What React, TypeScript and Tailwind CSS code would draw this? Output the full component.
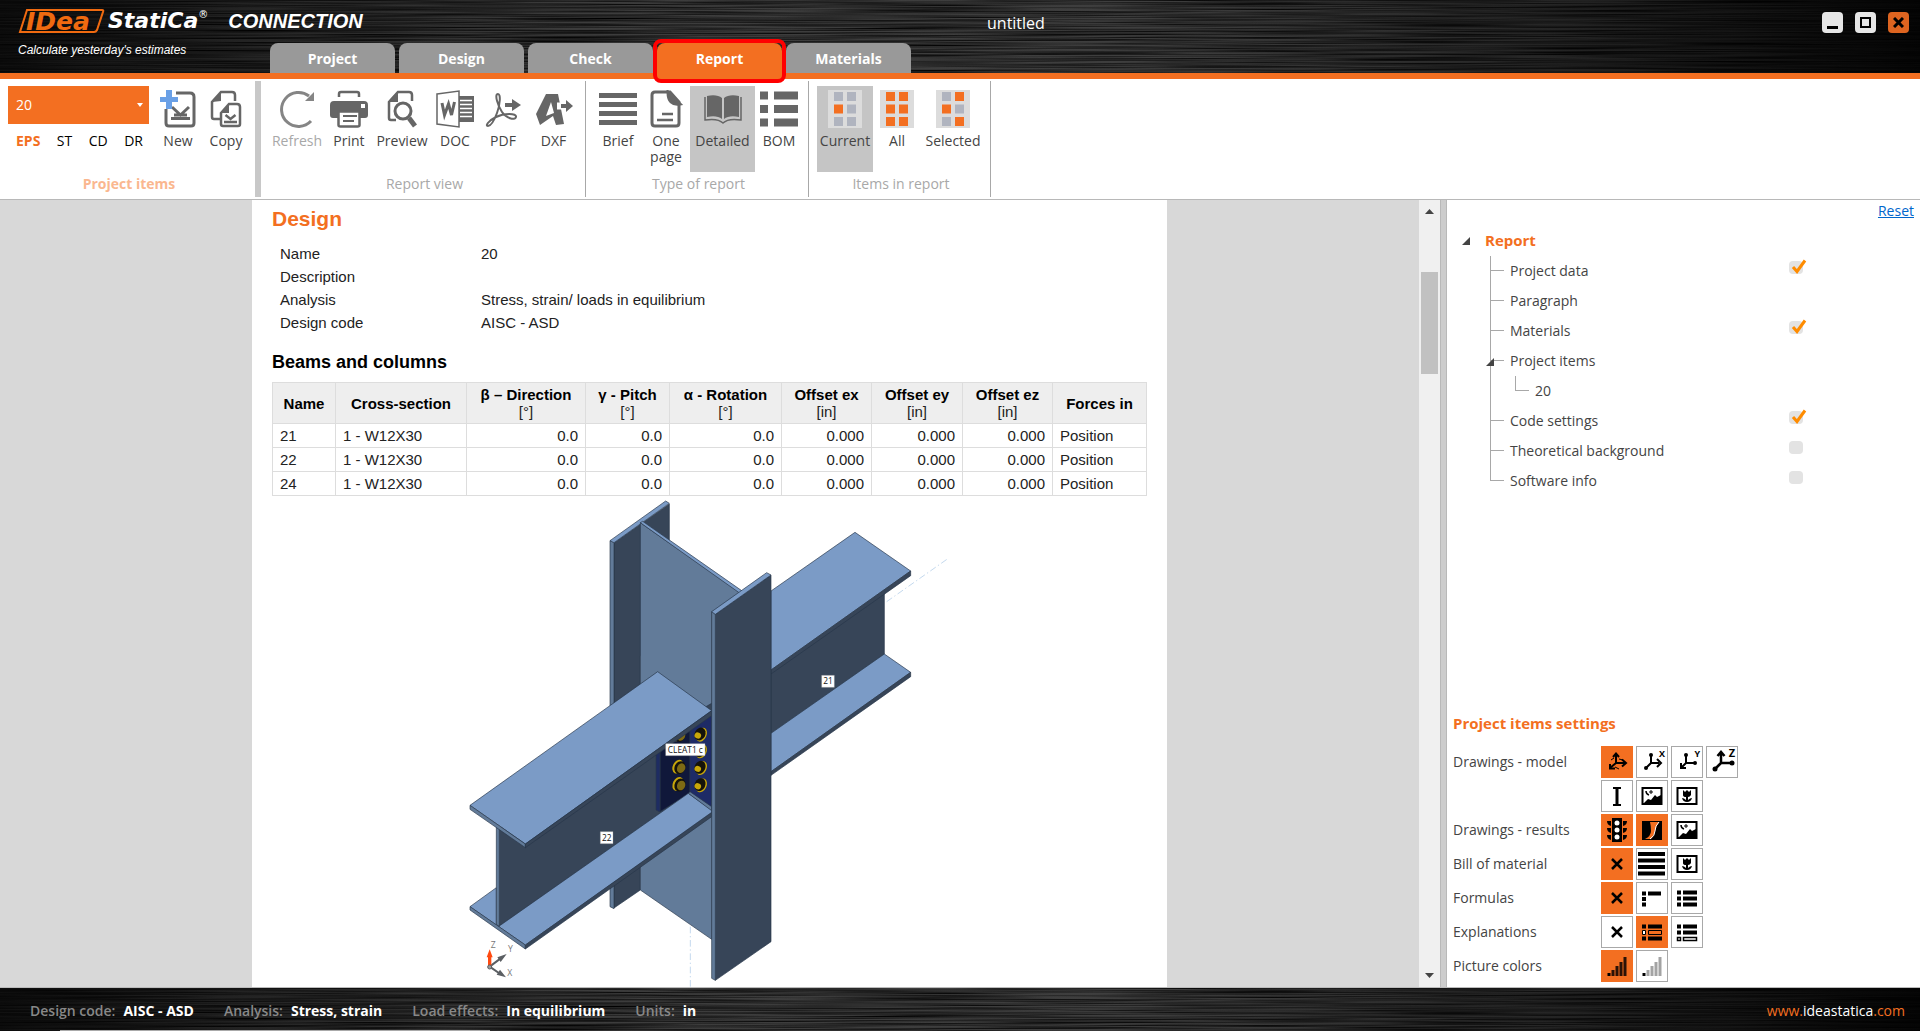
import React, { useState } from "react";

const tabs = ["Project", "Design", "Check", "Report", "Materials"];

const beams = ["21", "22", "24"];

const columns = [
  { title: "Name", unit: "" },
  { title: "Cross-section", unit: "" },
  { title: "β – Direction", unit: "[°]" },
  { title: "γ - Pitch", unit: "[°]" },
  { title: "α - Rotation", unit: "[°]" },
  { title: "Offset ex", unit: "[in]" },
  { title: "Offset ey", unit: "[in]" },
  { title: "Offset ez", unit: "[in]" },
  { title: "Forces in", unit: "" },
];

const Brushed: React.FC<{ id: string }> = ({ id }) => (
  <svg className="absolute inset-0 h-full w-full" aria-hidden="true">
    <defs>
      <linearGradient id={`${id}-shade`} x1="0" x2="1" y1="0" y2="0">
        <stop offset="0" stopColor="#101010" />
        <stop offset="0.12" stopColor="#222" />
        <stop offset="0.3" stopColor="#3c3c3c" />
        <stop offset="0.6" stopColor="#3e3e3e" />
        <stop offset="0.8" stopColor="#262626" />
        <stop offset="1" stopColor="#060606" />
      </linearGradient>
      <filter id={`${id}-grain`} x="0" y="0" width="100%" height="100%" colorInterpolationFilters="sRGB">
        <feTurbulence type="fractalNoise" baseFrequency="0.006 0.7" numOctaves="2" seed="7" />
        <feColorMatrix values="0 0 0 0 0  0 0 0 0 0  0 0 0 0 0  1.8 0 0 0 -0.58" />
      </filter>
    </defs>
    <rect width="100%" height="100%" fill={`url(#${id}-shade)`} />
    <rect width="100%" height="100%" filter={`url(#${id}-grain)`} />
  </svg>
);

/* ---------- Ribbon icons ---------- */

const Icon: React.FC<{ children: React.ReactNode }> = ({ children }) => (
  <svg width="38" height="38" viewBox="0 0 38 38" fill="none" stroke="#666" strokeWidth="3" aria-hidden="true">
    {children}
  </svg>
);

const NewIcon = () => (
  <Icon>
    <path d="M17 3h14q4 0 4 4v26q0 3-3 3H10q-3 0-3-3V19" />
    <path d="M12 28.500h19M13 17l8.500 8 8.500-8M15 25h13" />
    <path d="M7 0h6v7h6v5h-6v7H7v-7H1V7h6z" fill="#6aa0e6" stroke="none" />
  </Icon>
);

const CopyIcon = () => (
  <Icon>
    <path d="M13 29H7q-2 0-2-2V12l9-10h11q3 0 3 3v6" strokeWidth="2.500" />
    <path d="M5 12l9-10v9z" fill="#666" stroke="none" />
    <path d="M14 23l8-9h8q3 0 3 3v17q0 2-2 2H16q-2 0-2-2z" strokeWidth="2.500" />
    <path d="M14 23l8-9v9z" fill="#666" stroke="none" />
    <path d="M17 32h13M18.500 25l5 4 5-4" strokeWidth="2.500" />
  </Icon>
);

const RefreshIcon = () => (
  <Icon>
    <g stroke="#858585">
      <path d="M33 31A17 17 0 1 1 31 6" />
      <path d="M36 2v9h-9z" fill="#858585" stroke="none" />
    </g>
  </Icon>
);

const PrintIcon = () => (
  <Icon>
    <path d="M9 7V4q0-2 2-2h16q2 0 2 2v3" strokeWidth="2.500" />
    <path d="M4 11h30q4 0 4 4v10q0 3-3 3h-5v-6H8v6H3q-3 0-3-3V15q0-4 4-4z" fill="#666" stroke="none" />
    <rect x="31" y="14" width="4" height="4" fill="#fff" stroke="none" />
    <path d="M8.500 21.500h21V35q0 1.500-2 1.500h-17q-2 0-2-1.500z" fill="#fff" strokeWidth="2.500" />
    <path d="M13 26h14M13 31h11" strokeWidth="2" />
  </Icon>
);

const PreviewIcon = () => (
  <Icon>
    <path d="M13 30H8q-2 0-2-2V12l9-10h11q3 0 3 3v6" strokeWidth="2.500" />
    <path d="M5 12l10-11v11z" fill="#666" stroke="none" />
    <circle cx="20" cy="21" r="8" />
    <path d="M26 28l6 8" strokeWidth="5" />
  </Icon>
);

const DocIcon = () => (
  <Icon>
    <path d="M23 6h15v26H23z" fill="#666" stroke="none" />
    <path d="M24 10.500h12M24 14.500h12M24 18.500h12M24 22.500h12M24 26.500h12" stroke="#fff" strokeWidth="1.500" />
    <path d="M1 4l22-3v36L1 34z" fill="#fff" strokeWidth="1.500" />
    <path d="M6 13l2.500 12 4-11 3 11 3-13" strokeWidth="3" />
  </Icon>
);

const PdfIcon = () => (
  <Icon>
    <path d="M14 4c-4 0 0 12 4 18s13 9 14 5-12-4-20 0-11 9-8 9 6-5 9-13 4-19 1-19z" strokeWidth="2" />
    <path d="M21 15h8" strokeWidth="4" />
    <path d="M28 9l9 6-9 6z" fill="#666" stroke="none" />
  </Icon>
);

const DxfIcon = () => (
  <Icon>
    <path d="M1 24L11 4h12l6 30-8 1-3-9-13 9z" fill="#666" stroke="none" />
    <path d="M16 12l-5 14 8-3z" fill="#fff" stroke="none" />
    <path d="M22 16h8" stroke="#fff" strokeWidth="7" />
    <path d="M26 16h6" strokeWidth="4" />
    <path d="M31 10l7 6-7 6z" fill="#666" stroke="none" />
  </Icon>
);

const BriefIcon = () => (
  <Icon>
    <path d="M0 5.500h38M0 14.500h38M0 23.500h38M0 32.500h38" strokeWidth="5" />
  </Icon>
);

const OnePageIcon = () => (
  <Icon>
    <path d="M9 2h14l9 10v21q0 3-3 3H8q-3 0-3-3V5q0-3 3-3z" />
    <path d="M21 2l12 12q-12 2-12-12z" fill="#666" />
    <path d="M15 24h11M10 30h16" strokeWidth="2.500" />
  </Icon>
);

const DetailedIcon = () => (
  <Icon>
    <path d="M3 6q10-2 15 2v21q-5-4-15-2z" fill="#666" stroke="none" />
    <path d="M35 6q-10-2-15 2v21q5-4 15-2z" fill="#666" stroke="none" />
    <path d="M1 7v23q13-2 18 3 5-5 18-3V7" strokeWidth="1.500" />
  </Icon>
);

const BomIcon = () => (
  <Icon>
    <path d="M0 5.500h8M14 5.500h24M0 19h8M14 19h24M0 32.500h8M14 32.500h24" strokeWidth="8" />
  </Icon>
);

// Two columns by three rows, "on" lists the highlighted squares
const GridIcon: React.FC<{ on: number[] }> = ({ on }) => (
  <Icon>
    <rect x="2" width="34" height="38" fill="#dcdcdc" stroke="none" />
    {[0, 1, 2, 3, 4, 5].map((i) => (
      <rect
        key={i}
        x={8 + (i % 2) * 13}
        y={2 + Math.floor(i / 2) * 12.5}
        width="9"
        height="9"
        fill={on.includes(i) ? "#f36f21" : "#b0b4bf"}
        stroke="none"
      />
    ))}
  </Icon>
);

interface RibbonButtonProps {
  label: string;
  icon: React.ReactNode;
  width?: string;
  active?: boolean;
  disabled?: boolean;
}

const RibbonButton: React.FC<RibbonButtonProps> = ({ label, icon, width = "w-12", active, disabled }) => (
  <button
    type="button"
    disabled={disabled}
    className={`flex h-[86px] flex-col items-center gap-[5px] pt-1 leading-4 ${width} ${
      active ? "bg-[#c5c5c5]" : ""
    } ${disabled ? "text-[#a8a8a8]" : "text-[#444]"}`}
  >
    {icon}
    <span>{label}</span>
  </button>
);

const RibbonGroup: React.FC<{ title: string; children: React.ReactNode }> = ({ title, children }) => (
  <section className="my-[2px] border-r border-[#a8a8a8] py-[5px] pr-[5px] pl-2">
    <div className="flex">{children}</div>
    <h2 className="mt-1 text-center leading-4 text-[#a8a8a8]">{title}</h2>
  </section>
);

/* ---------- Structure drawing ---------- */

const LIGHT = "#7b9bc6";
const MID = "#627b99";
const DARK = "#374558";

const Bolt: React.FC<{ x: number; y: number; nut?: boolean }> = ({ x, y, nut }) => (
  <g transform={`translate(${x} ${y}) rotate(25)`} stroke="none">
    <ellipse cx={nut ? 5 : -5} rx="15" ry="22" fill="#c7a60a" />
    <ellipse cx={nut ? 0 : 2} rx="16" ry="20" fill="#15130a" />
    <ellipse cx={nut ? -4 : 6} cy={nut ? 7 : 0} rx={nut ? 10 : 12} ry={nut ? 9 : 15} fill={nut ? "#c7a60a" : "#7d6a14"} />
  </g>
);

const Tag: React.FC<{ x: number; y: number; w: number; text: string }> = ({ x, y, w, text }) => (
  <g stroke="none">
    <rect x={x} y={y} width={w} height="36" fill="#fff" stroke="#999" />
    <text x={x + w / 2} y={y + 27} textAnchor="middle" fontSize="25" fill="#111" fontFamily="'Open Sans', sans-serif">
      {text}
    </text>
  </g>
);

const JointDrawing = () => (
  <svg width="490" height="491" viewBox="0 18 1470 1473" className="shrink-0" strokeLinejoin="round" role="img" aria-label="Joint model">
    <path d="M1280 335L1465 205M691 1310V1491" stroke="#c4d9ee" strokeWidth="3" strokeDasharray="20 8 4 8" />
    <g stroke="#27364a" strokeWidth="2">
      {/* back flange */}
      <path d="M462 158L628 42V300L541 500V1200L462 1254z" fill={DARK} />
      <path d="M450 152l12 6v1098l-12-6z" fill={MID} />
      <path d="M450 152L617 33l11 7L462 158z" fill={LIGHT} />
      {/* column web */}
      <path d="M541 98l299 210 -85 60v980L541 1200z" fill={MID} />
      <path d="M541 98l7-4 300 210-8 6z" fill={LIGHT} />
      {/* beam 21 */}
      <path d="M933 545L1273 310V495L933 733z" fill={DARK} />
      <path d="M933 730L1273 492l79 55L933 845z" fill={LIGHT} />
      <path d="M933 845L1352 547v13L933 856z" fill={DARK} />
      <path d="M933 303L1185 127l167 116L933 540z" fill={LIGHT} />
      <path d="M933 540L1352 243v14L933 552z" fill={DARK} />
      {/* beam 22 */}
      <path d="M118 1015L755 640V930L118 1308z" fill={DARK} />
      <path d="M600 770l90-60v200l-90 55z" fill="#10183a" />
      <path d="M588 780h12v186l-12-6z" fill="#1e2c62" />
      <path d="M690 700l65-40v300l-65-40z" fill="#1e2b66" />
      <g>
        <Bolt x={658} y={735} />
        <Bolt x={658} y={832} />
        <Bolt x={658} y={884} />
        <Bolt x={720} y={732} nut />
        <Bolt x={720} y={782} nut />
        <Bolt x={720} y={832} nut />
        <Bolt x={720} y={884} nut />
      </g>
      <path d="M30 1250l79-57v110l9 5L685 910l70 50v10L196 1365z" fill={LIGHT} />
      <path d="M685 910l5-5 65 45v12z" fill={MID} />
      <path d="M30 1250l166 115v12L30 1260z" fill={MID} />
      <path d="M196 1365L755 967v13L196 1377z" fill={DARK} />
      <path d="M109 1005l9 6v298l-9-6z" fill={MID} />
      <path d="M30 946L593 545l162 117L196 1062z" fill={LIGHT} />
      <path d="M30 946l166 116v11L30 958z" fill={MID} />
      <path d="M196 1062L755 662v15L196 1073z" fill={DARK} />
      {/* front flange */}
      <path d="M766 373L933 255v1100L766 1471z" fill={DARK} />
      <path d="M755 365l11 8v1098l-11-6z" fill={MID} />
      <path d="M755 365L920 248l13 7L766 373z" fill={LIGHT} />
    </g>
    <Tag x={617} y={761} w={118} text="CLEAT1 c" />
    <Tag x={1085} y={556} w={38} text="21" />
    <Tag x={421} y={1025} w={38} text="22" />
    {/* axes */}
    <g stroke="#5b5f63" strokeWidth="6" fill="#5b5f63">
      <path d="M89 1430l32-24M89 1430l32 22" />
      <path d="M140 1392l-18 24-10-14zM138 1462l-28-8 10-15z" stroke="none" />
      <path d="M89 1430v-32" stroke="#ff4a10" strokeWidth="10" />
      <path d="M89 1378l9 24H80z" fill="#ff4a10" stroke="none" />
      <circle cx="89" cy="1431" r="6" fill="#999" strokeWidth="3" />
    </g>
    <g fontSize="26" fill="#777" fontFamily="'Open Sans', sans-serif">
      <text x="92" y="1373">Z</text>
      <text x="144" y="1387">Y</text>
      <text x="142" y="1457">X</text>
    </g>
  </svg>
);

/* ---------- Settings icons ---------- */

const Small: React.FC<{ children: React.ReactNode }> = ({ children }) => (
  <svg width="30" height="30" viewBox="0 0 30 30" className="overflow-visible" fill="none" stroke="#000" strokeWidth="2" aria-hidden="true">
    {children}
  </svg>
);

const Axes3d = (
  <Small>
    <path d="M14 16V7M14 16h9M14 16l-6 5" />
    <path d="M11 10l3-3.500 3 3.500M20 12.500l4 3.500-4 3.500M8 17v4.500h5" />
    <path d="M9 13l3-2M17 12l4 1M13 20l4 2" strokeWidth="1" />
  </Small>
);

// View along one axis: dots mark the far ends, arrows the visible ones
const axisView = (axis: string) => (
  <Small>
    {axis === "Z" ? (
      <g strokeWidth="2.500">
        <path d="M14 16V5M14 16h10M14 16l-6 6M10.500 9L14 5l3.500 4" />
        <circle cx="25" cy="16" r="2.500" fill="#000" stroke="none" />
        <circle cx="8" cy="22" r="2.500" fill="#000" stroke="none" />
      </g>
    ) : (
      <g>
        <path d="M14 16V8M14 16h8M14 16l-5 5" />
        <circle cx="14" cy="8" r="2" fill="#000" stroke="none" />
        {axis === "X" ? <path d="M20 12l4 4-4 4" /> : <circle cx="23" cy="16" r="2" fill="#000" stroke="none" />}
        {axis === "Y" ? <path d="M9 16v5h5" /> : <circle cx="9" cy="21" r="2" fill="#000" stroke="none" />}
      </g>
    )}
    <text
      x="28"
      y="10"
      textAnchor="end"
      fontSize={axis === "Z" ? 11 : 9}
      fontWeight="700"
      fill="#000"
      stroke="none"
      fontFamily="'Open Sans', sans-serif"
    >
      {axis}
    </text>
  </Small>
);

const ProfileIcon = (
  <Small>
    <path d="M11 7h8M11 24h8" strokeWidth="2" />
    <path d="M15 7v17" strokeWidth="3" />
  </Small>
);

const Landscape = (
  <Small>
    <rect x="5.500" y="7" width="19" height="16" />
    <path d="M7 22l4-4 3 1 4-5 2 2 4-2v8z" fill="#000" stroke="none" />
    <path d="M9 10q0 3 3 4" strokeWidth="1.500" />
    <path d="M14 9v4M12 11h4" strokeWidth="1" />
  </Small>
);

const Flower = (
  <Small>
    <rect x="5.500" y="7" width="19" height="16" />
    <path d="M11 9l2 2 2-2 2 2 2-2v5q-1 2-3 2v3q2-2 4-2-1 4-5 4t-5-4q2 0 4 2v-3q-3 0-3-2z" fill="#000" stroke="none" />
  </Small>
);

const TrafficLight = (
  <Small>
    <rect x="11" y="4" width="8" height="22" fill="#000" />
    <path d="M5 6h4v5q-4-1-4-5zM5 13h4v5q-4-1-4-5zM5 20h4v5q-4-1-4-5zM25 6h-4v5q4-1 4-5zM25 13h-4v5q4-1 4-5zM25 20h-4v5q4-1 4-5z" fill="#000" stroke="none" />
    <g fill="#fff" stroke="none">
      <circle cx="15" cy="8" r="2.500" />
      <circle cx="15" cy="15" r="2.500" />
      <circle cx="15" cy="22" r="2.500" />
    </g>
  </Small>
);

const RoadIcon = (
  <Small>
    <rect x="5" y="6" width="20" height="19" fill="#000" stroke="none" />
    <path d="M13 7h9q-3 4-4 9t-4 8H8q6-3 6-8t-1-9z" fill="#f36f21" stroke="none" />
    <path d="M22 7q-4 4-4 9t-5 8" stroke="#fff" strokeWidth="1" />
  </Small>
);

const NoneIcon = (
  <Small>
    <path d="M10 10l10 10M20 10L10 20" strokeWidth="2.500" />
  </Small>
);

const LinesIcon = (
  <Small>
    <path d="M1 5h27M1 11.500h27M1 18h27M1 24.500h27" strokeWidth="4" />
  </Small>
);

const ShortList = (
  <Small>
    <path d="M5 10.500h4M11 10.500h13M5 16h4M5 21.500h4" strokeWidth="4" />
  </Small>
);

const FullList = (
  <Small>
    <path d="M5 9.500h4M11 9.500h14M5 15.500h4M11 15.500h14M5 21.500h4M11 21.500h14" strokeWidth="4" />
  </Small>
);

const MiddleList = (
  <Small>
    <path d="M5 9.500h4M11 9.500h14M5 21.500h4M11 21.500h14" strokeWidth="4" />
    <path d="M5.500 13.500h3v4h-3z" fill="#fff" strokeWidth="1" />
    <path d="M11.500 13.500h13v4h-13z" strokeWidth="1" />
  </Small>
);

const EndList = (
  <Small>
    <path d="M5 9.500h4M11 9.500h14M5 15.500h4M11 15.500h14" strokeWidth="4" />
    <path d="M5.500 20.500h3v3h-3zM11.500 20.500h13v3h-13z" strokeWidth="1.500" />
  </Small>
);

const barsIcon = (color: string) => (
  <Small>
    <path d="M11 25v-6M15 25V15M19 25V11M23 25V6" stroke={color} strokeWidth="3" />
    <path d="M7 25v-3" strokeWidth="3" />
  </Small>
);

interface Option {
  name: string;
  icon: React.ReactNode;
  on?: boolean;
}

const settings: { label: string; options: Option[] }[] = [
  {
    label: "Drawings - model",
    options: [
      { name: "Axonometry", icon: Axes3d, on: true },
      { name: "View X", icon: axisView("X") },
      { name: "View Y", icon: axisView("Y") },
      { name: "View Z", icon: axisView("Z") },
    ],
  },
  {
    label: "",
    options: [
      { name: "Cross-section", icon: ProfileIcon },
      { name: "Scene", icon: Landscape },
      { name: "Picture", icon: Flower },
    ],
  },
  {
    label: "Drawings - results",
    options: [
      { name: "Overall check", icon: TrafficLight, on: true },
      { name: "Strain", icon: RoadIcon, on: true },
      { name: "Scene", icon: Landscape },
    ],
  },
  {
    label: "Bill of material",
    options: [
      { name: "None", icon: NoneIcon, on: true },
      { name: "Table", icon: LinesIcon },
      { name: "Picture", icon: Flower },
    ],
  },
  {
    label: "Formulas",
    options: [
      { name: "None", icon: NoneIcon, on: true },
      { name: "Short", icon: ShortList },
      { name: "Full", icon: FullList },
    ],
  },
  {
    label: "Explanations",
    options: [
      { name: "None", icon: NoneIcon },
      { name: "After table", icon: MiddleList, on: true },
      { name: "At the end", icon: EndList },
    ],
  },
  {
    label: "Picture colors",
    options: [
      { name: "Color", icon: barsIcon("#2b1206"), on: true },
      { name: "Gray", icon: barsIcon("#a3a3a3") },
    ],
  },
];

/* ---------- Report tree ---------- */

interface TreeItem {
  label: string;
  checked?: boolean;
  child?: boolean;
  expanded?: boolean;
}

const treeItems: TreeItem[] = [
  { label: "Project data", checked: true },
  { label: "Paragraph" },
  { label: "Materials", checked: true },
  { label: "Project items", expanded: true },
  { label: "20", child: true },
  { label: "Code settings", checked: true },
  { label: "Theoretical background", checked: false },
  { label: "Software info", checked: false },
];

const Branch: React.FC<{ last?: boolean; children?: React.ReactNode }> = ({ last, children }) => (
  <span className="relative flex h-full w-[14px] shrink-0 flex-col">
    <span className="h-1/2 border-b border-l border-[#a8a8a8]" />
    <span className={last ? "h-1/2" : "h-1/2 border-l border-[#a8a8a8]"} />
    {children}
  </span>
);

const Expander = () => (
  <svg width="8" height="8" viewBox="0 0 8 8" fill="#444" aria-hidden="true">
    <path d="M8 0v8H0z" />
  </svg>
);

const TreeRow: React.FC<{ item: TreeItem; last: boolean }> = ({ item, last }) => {
  const [checked, setChecked] = useState(!!item.checked);
  return (
    <li>
      <label className="flex h-[30px] items-center">
        {item.child ? (
          <>
            <span className="h-full w-[25px] border-l border-[#a8a8a8]" />
            <Branch last />
          </>
        ) : (
          <Branch last={last}>
            {item.expanded && (
              <span className="absolute top-3 -left-1">
                <Expander />
              </span>
            )}
          </Branch>
        )}
        <span className="flex-1 pl-[6px]">{item.label}</span>
        {item.checked !== undefined && (
          <span className="relative mb-[7px] h-[13px] w-[14px]">
            <input
              type="checkbox"
              checked={checked}
              onChange={(e) => setChecked(e.target.checked)}
              className="block h-[13px] w-[14px] appearance-none rounded-sm bg-[#e3e3e3]"
            />
            {checked && (
              <svg className="pointer-events-none absolute -top-[2px] left-[2px]" width="16" height="15" viewBox="0 0 16 15" fill="none" aria-hidden="true">
                <path d="M2 8l4 4.500 8-11" stroke="#ff8c00" strokeWidth="3" />
              </svg>
            )}
          </span>
        )}
      </label>
    </li>
  );
};

const statusItems = [
  ["Design code:", "AISC - ASD"],
  ["Analysis:", "Stress, strain"],
  ["Load effects:", "In equilibrium"],
  ["Units:", "in"],
];

const App: React.FC = () => {
  const [activeTab, setActiveTab] = useState("Report");

  return (
    <div className="flex h-screen flex-col overflow-hidden bg-white font-['Open_Sans','Noto_Sans',sans-serif] text-sm text-[#444]">
      {/* Title bar */}
      <header className="relative shrink-0 border-b-[6px] border-[#f36f21]">
        <Brushed id="top" />
        <div className="relative flex h-[73px] text-white">
          <div className="flex w-[270px] shrink-0 flex-col pt-2 pl-[18px] whitespace-nowrap">
            <div className="flex items-center">
              <svg width="88" height="26" viewBox="0 0 88 26" className="shrink-0 overflow-visible" role="img" aria-label="IDEA">
                <path d="M9 2h75q2 0 1 2l-6 18q-1 2-3 2H2z" fill="none" stroke="#f06a10" strokeWidth="2" />
                <text x="8" y="22" fontSize="25" fontWeight="700" fontStyle="italic" fill="#f06a10" fontFamily="'DejaVu Sans', sans-serif">
                  IDea
                </text>
              </svg>
              <span className="flex items-start pl-[2px] font-['DejaVu_Sans',sans-serif] text-[22px] leading-6 font-bold italic">
                StatiCa
                <sup className="top-0 text-[10px] leading-3 font-normal">®</sup>
              </span>
              <span className="pl-5 font-['Liberation_Sans',sans-serif] text-xl leading-6 font-bold italic">CONNECTION</span>
            </div>
            <span className="pt-2 font-['Liberation_Sans',sans-serif] text-xs leading-4 italic">Calculate yesterday's estimates</span>
          </div>
          <nav className="flex items-end gap-1">
            {tabs.map((tab) => (
              <button
                key={tab}
                type="button"
                onClick={() => setActiveTab(tab)}
                className={`relative h-[30px] w-[125px] rounded-t-lg pt-[2px] font-bold text-white ${
                  tab === activeTab ? "bg-[#f36f21]" : "bg-[#999]"
                }`}
              >
                {tab}
                {tab === activeTab && (
                  <span className="absolute -inset-x-1 -top-1 -bottom-[10px] rounded-lg border-4 border-[#f00]" />
                )}
              </button>
            ))}
          </nav>
          <p className="pt-3 pl-[76px] text-base leading-[22px]">untitled</p>
          <div className="ml-auto flex gap-3 pt-3 pr-[11px]">
            <button type="button" aria-label="Minimize" className="flex h-[21px] w-[21px] items-end justify-center rounded-sm bg-[#e6e6e6] pb-1">
              <span className="h-[3px] w-[11px] bg-black" />
            </button>
            <button type="button" aria-label="Maximize" className="flex h-[21px] w-[21px] items-center justify-center rounded-sm bg-[#e6e6e6]">
              <span className="h-[11px] w-[11px] border-2 border-black" />
            </button>
            <button type="button" aria-label="Close" className="flex h-[21px] w-[21px] items-center justify-center rounded-sm bg-[#dd6420]">
              <svg width="11" height="11" viewBox="0 0 11 11" stroke="#000" strokeWidth="3">
                <path d="M1 1l9 9M10 1l-9 9" />
              </svg>
            </button>
          </div>
        </div>
      </header>

      {/* Ribbon */}
      <div className="flex shrink-0 border-b border-[#b8b8b8]">
        <section className="my-[2px] border-r-[6px] border-[#c8c8c8] py-[5px] pr-[5px] pl-2">
          <div className="flex h-[86px]">
            <div className="w-[146px] pr-[5px]">
              <div className="relative">
                <select aria-label="Project item" className="h-[38px] w-full appearance-none bg-[#f36f21] pl-2 text-white">
                  <option>20</option>
                </select>
                <svg className="pointer-events-none absolute top-[17px] right-[6px]" width="6" height="4" viewBox="0 0 6 4" fill="#fff" aria-hidden="true">
                  <path d="M0 0h6L3 4z" />
                </svg>
              </div>
              <div className="mt-[9px] flex justify-between pr-[6px] pl-2 leading-4 text-black">
                <button type="button" className="font-bold text-[#f36f21]">EPS</button>
                <button type="button">ST</button>
                <button type="button">CD</button>
                <button type="button">DR</button>
              </div>
            </div>
            <RibbonButton label="New" icon={<NewIcon />} />
            <RibbonButton label="Copy" icon={<CopyIcon />} />
          </div>
          <h2 className="mt-1 text-center leading-4 font-bold text-[#fab78f]">Project items</h2>
        </section>
        <RibbonGroup title="Report view">
          <RibbonButton label="Refresh" icon={<RefreshIcon />} width="w-[56px]" disabled />
          <RibbonButton label="Print" icon={<PrintIcon />} />
          <RibbonButton label="Preview" icon={<PreviewIcon />} width="w-[58px]" />
          <RibbonButton label="DOC" icon={<DocIcon />} />
          <RibbonButton label="PDF" icon={<PdfIcon />} />
          <RibbonButton label="DXF" icon={<DxfIcon />} width="w-[53px]" />
        </RibbonGroup>
        <RibbonGroup title="Type of report">
          <RibbonButton label="Brief" icon={<BriefIcon />} />
          <RibbonButton label="One page" icon={<OnePageIcon />} />
          <RibbonButton label="Detailed" icon={<DetailedIcon />} width="w-[65px]" active />
          <RibbonButton label="BOM" icon={<BomIcon />} />
        </RibbonGroup>
        <RibbonGroup title="Items in report">
          <RibbonButton label="Current" icon={<GridIcon on={[2]} />} width="w-[56px]" active />
          <RibbonButton label="All" icon={<GridIcon on={[0, 1, 2, 3, 4, 5]} />} />
          <RibbonButton label="Selected" icon={<GridIcon on={[1, 2, 5]} />} width="w-[64px]" />
        </RibbonGroup>
      </div>

      {/* Workspace */}
      <div className="flex min-h-0 flex-1 border-b border-[#bbb]">
        <main className="flex min-w-0 flex-1 justify-center overflow-hidden bg-[#d8d8d8] font-['Liberation_Sans',Arial,sans-serif] text-[15px] text-[#222]">
          <article className="w-full max-w-[915px] bg-white px-5 pt-[7px]">
            <h1 className="text-[21px] leading-6 font-bold text-[#f36f21]">Design</h1>
            <dl className="mt-[11px] grid grid-cols-[201px_1fr] pl-2 leading-[23px]">
              <dt>Name</dt>
              <dd>20</dd>
              <dt>Description</dt>
              <dd />
              <dt>Analysis</dt>
              <dd>Stress, strain/ loads in equilibrium</dd>
              <dt>Design code</dt>
              <dd>AISC - ASD</dd>
            </dl>
            <h2 className="mt-4 text-lg leading-6 font-bold text-black">Beams and columns</h2>
            <table className="mt-2 w-full table-fixed border-collapse">
              <colgroup>
                <col className="w-[63px]" />
                <col className="w-[131px]" />
                <col className="w-[119px]" />
                <col className="w-[84px]" />
                <col className="w-[112px]" />
                <col className="w-[90px]" />
                <col className="w-[91px]" />
                <col className="w-[90px]" />
                <col className="w-[94px]" />
              </colgroup>
              <thead>
                <tr className="h-[41px] bg-[#eee]">
                  {columns.map((col) => (
                    <th key={col.title} className="border border-[#ddd] leading-[17px] font-bold text-black">
                      {col.title}
                      {col.unit && <span className="block font-normal text-[#222]">{col.unit}</span>}
                    </th>
                  ))}
                </tr>
              </thead>
              <tbody>
                {beams.map((name) => (
                  <tr key={name} className="h-6 [&>td]:border [&>td]:border-[#ddd] [&>td]:px-[7px] [&>td]:leading-5">
                    <td>{name}</td>
                    <td>1 - W12X30</td>
                    <td className="text-right">0.0</td>
                    <td className="text-right">0.0</td>
                    <td className="text-right">0.0</td>
                    <td className="text-right">0.000</td>
                    <td className="text-right">0.000</td>
                    <td className="text-right">0.000</td>
                    <td>Position</td>
                  </tr>
                ))}
              </tbody>
            </table>
            <div className="flex justify-center pr-[10px]">
              <JointDrawing />
            </div>
          </article>
        </main>

        {/* Scroll bar */}
        <div className="flex w-[21px] shrink-0 flex-col items-center bg-[#f0f0f0] py-[9px]">
          <svg width="9" height="5" viewBox="0 0 9 5" fill="#444" aria-hidden="true">
            <path d="M0 5h9L4.500 0z" />
          </svg>
          <div className="mt-[58px] h-[102px] w-[17px] bg-[#c1c1c1]" />
          <svg className="mt-auto" width="9" height="5" viewBox="0 0 9 5" fill="#444" aria-hidden="true">
            <path d="M0 0h9L4.500 5z" />
          </svg>
        </div>
        <div className="w-[7px] shrink-0 border-x border-[#b8b8b8] bg-[#ccc]" />

        <aside className="flex w-[473px] shrink-0 flex-col bg-white pb-[5px]">
          <div className="flex justify-end pr-[6px]">
            <a href="#reset" className="leading-[22px] text-[#0066cc] underline">Reset</a>
          </div>
          <div className="mt-1 flex h-[30px] items-center gap-[15px] pl-[15px]">
            <Expander />
            <h2 className="text-[15px] font-bold text-[#f36f21]">Report</h2>
          </div>
          <ul className="pr-[117px] pl-[43px]">
            {treeItems.map((item, i) => (
              <TreeRow key={item.label} item={item} last={i === treeItems.length - 1} />
            ))}
          </ul>

          <div className="mt-auto pl-[6px]">
            <h2 className="mb-[11px] text-[15px] leading-6 font-bold text-[#f36f21]">Project items settings</h2>
            <div className="flex flex-col gap-[2px]">
              {settings.map((row) => (
                <div key={row.label} className="flex items-center">
                  <span className="w-[148px]">{row.label}</span>
                  <div className="flex gap-[3px]">
                    {row.options.map((opt) => (
                      <button
                        key={opt.name}
                        type="button"
                        aria-label={opt.name}
                        aria-pressed={!!opt.on}
                        className={`h-8 w-8 border ${
                          opt.on ? "border-[#f36f21] bg-[#f36f21]" : "border-[#a8a8a8] bg-white"
                        }`}
                      >
                        {opt.icon}
                      </button>
                    ))}
                  </div>
                </div>
              ))}
            </div>
          </div>
        </aside>
      </div>

      {/* Status bar */}
      <footer className="relative shrink-0">
        <Brushed id="bottom" />
        <div className="relative flex h-[43px] items-center gap-[30px] pt-[2px] pr-[15px] pl-[30px]">
          {statusItems.map(([label, value]) => (
            <span key={label} className="flex gap-2 font-semibold text-[#888]">
              {label}
              <b className="font-bold text-white">{value}</b>
            </span>
          ))}
          <a href="#ideastatica" className="ml-auto text-[#f36f21]">
            www.<span className="text-white">ideastatica</span>.com
          </a>
        </div>
        <div className="absolute bottom-0 left-[60px] h-px w-[430px] bg-[#aaa]" />
      </footer>
    </div>
  );
};

export default App;
